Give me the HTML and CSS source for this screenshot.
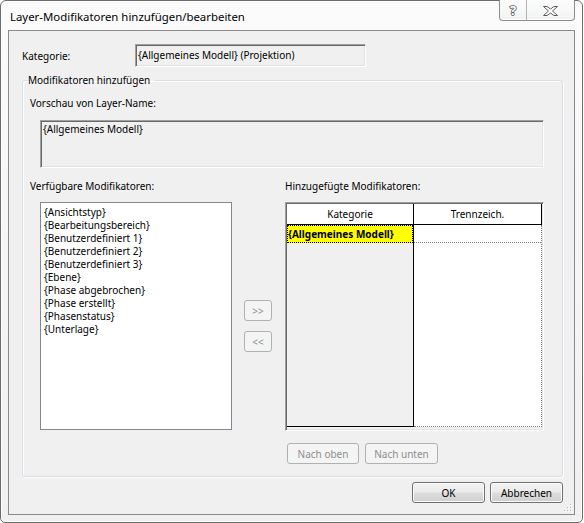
FILE: index.html
```html
<!DOCTYPE html>
<html lang="de">
<head>
<meta charset="utf-8">
<title>Layer-Modifikatoren hinzufügen/bearbeiten</title>
<link rel="stylesheet" href="styles.css">
</head>
<body>
<div class="window">
  <div class="titlebar">
    <span class="title">Layer-Modifikatoren hinzufügen/bearbeiten</span>
    <div class="caption">
      <span class="cap-btn help">
        <svg width="14" height="18" viewBox="0 0 14 18">
          <text x="7" y="14" text-anchor="middle" font-family="Noto Sans, sans-serif" font-size="13" font-weight="bold" fill="#ffffff" stroke="#5a5a5a" stroke-width="1.6" paint-order="stroke" stroke-linejoin="round">?</text>
        </svg>
      </span>
      <span class="cap-btn close">
        <svg width="15" height="10" viewBox="0 0 15 10">
          <polygon points="0.5,0.5 4,0.5 7.5,3 11,0.5 14.5,0.5 9.5,5 14.5,9.5 11,9.5 7.5,7 4,9.5 0.5,9.5 5.5,5" fill="#fff" stroke="#5a5a5a" stroke-width="1" stroke-linejoin="round"/>
        </svg>
      </span>
    </div>
  </div>

  <div class="client">
    <div class="kat-row">
      <span class="kat-label">Kategorie:</span>
      <div class="field sunken">{Allgemeines Modell} (Projektion)</div>
    </div>

    <fieldset class="group">
      <legend>Modifikatoren hinzufügen</legend>
      <div class="lbl">Vorschau von Layer-Name:</div>
      <div class="preview sunken">{Allgemeines Modell}</div>

      <div class="lists">
        <div class="col-left">
          <div class="lbl">Verfügbare Modifikatoren:</div>
          <ul class="listbox">
            <li>{Ansichtstyp}</li>
            <li>{Bearbeitungsbereich}</li>
            <li>{Benutzerdefiniert 1}</li>
            <li>{Benutzerdefiniert 2}</li>
            <li>{Benutzerdefiniert 3}</li>
            <li>{Ebene}</li>
            <li>{Phase abgebrochen}</li>
            <li>{Phase erstellt}</li>
            <li>{Phasenstatus}</li>
            <li>{Unterlage}</li>
          </ul>
        </div>

        <div class="col-mid">
          <button class="btn arrow" disabled>&gt;&gt;</button>
          <button class="btn arrow" disabled>&lt;&lt;</button>
        </div>

        <div class="col-right">
          <div class="lbl">Hinzugefügte Modifikatoren:</div>
          <div class="grid sunken">
            <div class="grid-head">
              <div class="hcell">Kategorie</div>
              <div class="hcell">Trennzeich.</div>
            </div>
            <div class="grid-body">
              <div class="gcol gcol-cat">
                <div class="gcell sel">{Allgemeines Modell}</div>
              </div>
              <div class="gcol gcol-sep">
                <div class="gcell"></div>
              </div>
            </div>
          </div>
          <div class="order-btns">
            <button class="btn up" disabled>Nach oben</button>
            <button class="btn down" disabled>Nach unten</button>
          </div>
        </div>
      </div>
    </fieldset>

    <div class="footer">
      <button class="btn action">OK</button>
      <button class="btn action">Abbrechen</button>
    </div>

    <svg class="grip" width="10" height="10" viewBox="0 0 10 10">
      <g fill="#b8b8b8">
        <rect x="7" y="1" width="1" height="1"/>
        <rect x="4" y="4" width="1" height="1"/><rect x="7" y="4" width="1" height="1"/>
        <rect x="1" y="7" width="1" height="1"/><rect x="4" y="7" width="1" height="1"/><rect x="7" y="7" width="1" height="1"/>
      </g>
      <g fill="#fff">
        <rect x="8" y="2" width="1" height="1"/>
        <rect x="5" y="5" width="1" height="1"/><rect x="8" y="5" width="1" height="1"/>
        <rect x="2" y="8" width="1" height="1"/><rect x="5" y="8" width="1" height="1"/><rect x="8" y="8" width="1" height="1"/>
      </g>
    </svg>
  </div>
</div>
</body>
</html>
```

FILE: styles.css
```css
* {
  box-sizing: border-box;
}

html,
body {
  margin: 0;
  background: #ffffff;
}

body {
  font-family: "Noto Sans", "Open Sans", sans-serif;
  font-size: 10px;
  color: #000;
}

/* window frame */
.window {
  width: 583px;
  height: 523px;
  border: 1px solid #6b6b6b;
  border-radius: 6px 6px 5px 5px;
  background: linear-gradient(#fbfbfc, #eef0f2);
  box-shadow: inset 0 0 0 1px #ffffff;
  padding: 0 7px 7px;
  display: flex;
  flex-direction: column;
}

.titlebar {
  height: 29px;
  display: flex;
  align-items: flex-start;
}

.title {
  font-size: 11.4px;
  line-height: 16px;
  margin: 8px 0 0 2px;
}

.caption {
  margin: -1px 0 0 auto;
  width: 76px;
  height: 21px;
  display: flex;
  border: 1px solid #8c8c8c;
  border-top: none;
  border-radius: 0 0 4px 4px;
  background: linear-gradient(#fdfdfd, #f1f2f3);
  box-shadow: inset 0 -1px 0 #ffffff;
}

.cap-btn {
  display: flex;
  align-items: center;
  justify-content: center;
}

.help {
  width: 27px;
  border-right: 1px solid #b4b4b4;
}

.close {
  flex: 1;
  padding-top: 1px;
}

/* client area */
.client {
  flex: 1;
  border: 1px solid #8a8a8a;
  background: #f0f0f0;
  position: relative;
  display: flex;
  flex-direction: column;
}

.sunken {
  border-style: solid;
  border-width: 1px;
  border-color: #a0a0a0 #ffffff #ffffff #a0a0a0;
  box-shadow: inset 1px 1px 0 #696969, inset -1px -1px 0 #e3e3e3;
}

.kat-row {
  display: flex;
  align-items: center;
  height: 23px;
  margin: 13px 0 0 13px;
}

.kat-label {
  width: 113px;
}

.field {
  width: 231px;
  height: 23px;
  line-height: 20px;
  padding-left: 2px;
  background: #f0f0f0;
}

/* group box */
.group {
  margin: 6px 11px 0 13px;
  padding: 0 0 12px 7px;
  border: 1px solid #d5dfe5;
  border-radius: 3px;
  box-shadow: 1px 1px 0 #ffffff, inset 1px 1px 0 #ffffff;
  min-width: 0;
}

.group legend {
  margin-left: 0;
  padding: 0 2px 0 1px;
  line-height: 15px;
  position: relative;
  left: -3px;
}

.lbl {
  line-height: 15px;
}

.group > .lbl {
  margin-top: 8px;
}

.preview {
  width: 504px;
  height: 48px;
  margin: 9px 0 0 10px;
  padding: 1px 2px 0;
  line-height: 14px;
}

.lists {
  display: flex;
  margin-top: 11px;
}

.col-left {
  width: 202px;
}

.listbox {
  list-style: none;
  margin: 8px 0 0 10px;
  padding: 3px 0 0 3px;
  width: 192px;
  height: 228px;
  border: 1px solid #828790;
  background: #ffffff;
  line-height: 13px;
}

.col-mid {
  width: 28px;
  margin-left: 12px;
  padding-top: 121px;
  display: flex;
  flex-direction: column;
  gap: 10px;
}

.col-right {
  width: 259px;
  margin-left: 13px;
}

/* buttons */
.btn {
  font: inherit;
  height: 21px;
  padding: 0;
  border: 1px solid #707070;
  border-radius: 3px;
  background: linear-gradient(#f2f2f2 0%, #ebebeb 48%, #dddddd 52%, #cfcfcf 100%);
  box-shadow: inset 0 0 0 1px #fcfcfc;
  color: #000;
}

.btn:disabled {
  border-color: #adb2b5;
  background: #f4f4f4;
  box-shadow: none;
  color: #8d8d8d;
}

.arrow {
  width: 28px;
}

/* modifier table */
.grid {
  width: 259px;
  height: 229px;
  margin-top: 8px;
  background: #f0f0f0;
}

.grid-head {
  display: flex;
  height: 21px;
  margin: 1px 0 0 1px;
  border-bottom: 1px solid #000;
  background: #ffffff;
  width: 255px;
}

.hcell {
  border-right: 1px solid #000;
  text-align: center;
  line-height: 20px;
}

.hcell:first-child {
  width: 127px;
}

.hcell:last-child {
  width: 128px;
}

.grid-body {
  display: flex;
  height: 202px;
  margin-left: 1px;
}

.gcol {
  height: 202px;
}

.gcol-cat {
  width: 127px;
  border-right: 1px solid #000;
  border-bottom: 1px solid #000;
  background: #f0f0f0;
}

.gcol-sep {
  width: 128px;
  border-right: 1px dotted #7a7a7a;
  border-bottom: 1px dotted #7a7a7a;
  background: #ffffff;
}

.gcell {
  height: 18px;
  border-bottom: 1px dotted #7a7a7a;
  line-height: 16px;
}

.gcell.sel {
  border: 1px dotted #000;
  background: #ffff00;
  font-weight: bold;
  padding-left: 0;
}

.order-btns {
  display: flex;
  gap: 6px;
  margin: 12px 0 0 2px;
}

.up {
  width: 72px;
}

.down {
  width: 73px;
}

/* dialog buttons */
.footer {
  display: flex;
  justify-content: flex-end;
  gap: 5px;
  margin: 5px 11px 0 0;
}

.action {
  width: 73px;
}

.grip {
  position: absolute;
  right: 1px;
  bottom: 1px;
}
```
